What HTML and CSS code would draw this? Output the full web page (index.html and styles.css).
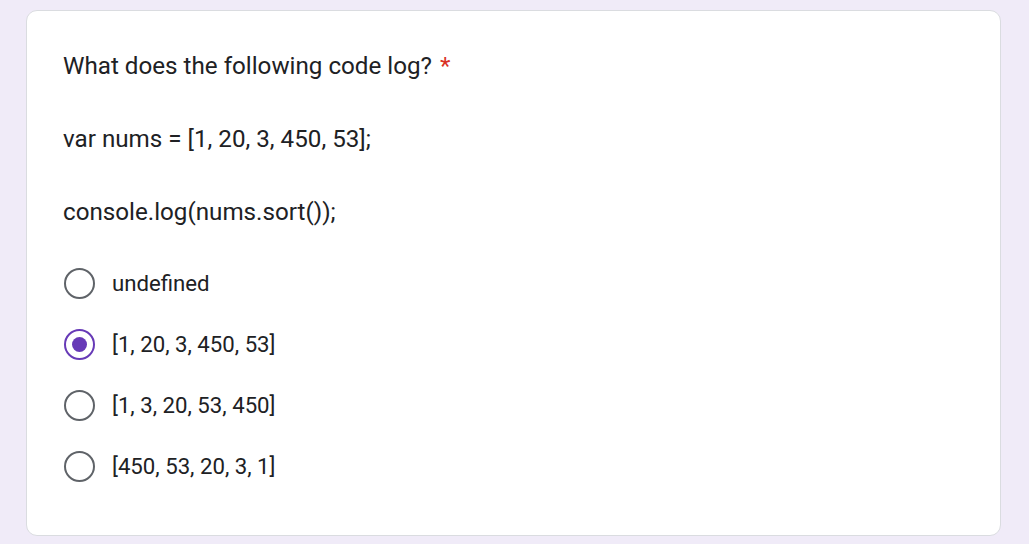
FILE: index.html
```html
<!DOCTYPE html>
<html>
<head>
<meta charset="utf-8">
<link rel="stylesheet" href="styles.css">
</head>
<body>
<div class="card">
  <div class="title">
    <div class="line">What does the following code log? <span class="req">*</span></div>
    <div class="line code">var nums = [1, 20, 3, 450, 53];</div>
    <div class="line code">console.log(nums.sort());</div>
  </div>
  <div class="options">
    <div class="opt"><span class="radio"></span><span class="label">undefined</span></div>
    <div class="opt"><span class="radio checked"></span><span class="label">[1, 20, 3, 450, 53]</span></div>
    <div class="opt"><span class="radio"></span><span class="label">[1, 3, 20, 53, 450]</span></div>
    <div class="opt"><span class="radio"></span><span class="label">[450, 53, 20, 3, 1]</span></div>
  </div>
</div>
</body>
</html>
```
FILE: styles.css
```css
html, body {
  margin: 0;
  padding: 0;
  background: #f0ebf8;
}
body {
  padding: 10px 28px 0 26px;
  font-family: Roboto, "Liberation Sans", sans-serif;
  color: #202124;
}
.card {
  background: #fff;
  border: 1px solid #dadce0;
  border-radius: 11px;
  padding: 37px 36px 40px 36px;
  height: 447px;
}
.title {
  font-size: 24.2px;
  line-height: 36px;
  letter-spacing: 0;
}
.line {
  margin-bottom: 37px;
}
.req {
  color: #d93025;
  margin-left: 2px;
}
.options {
  display: flex;
  flex-direction: column;
  gap: 29px;
  margin-top: 3px;
}
.opt {
  display: flex;
  align-items: center;
  height: 32px;
  font-size: 22.2px;
}
.radio {
  box-sizing: border-box;
  width: 31px;
  height: 31px;
  border: 2.8px solid #5f6368;
  border-radius: 50%;
  margin-left: 1px;
  margin-right: 17px;
  display: flex;
  align-items: center;
  justify-content: center;
}
.radio.checked {
  border-color: #673ab7;
}
.radio.checked::after {
  content: "";
  width: 15px;
  height: 15px;
  border-radius: 50%;
  background: #673ab7;
}
```
